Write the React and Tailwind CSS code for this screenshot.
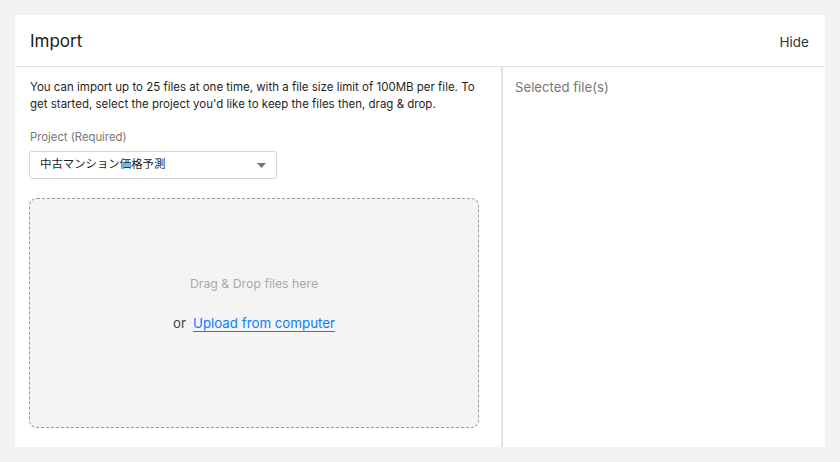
export default function App() {
  return (
    <div className="w-[840px] h-[462px] bg-[#f2f2f2] p-[15px] font-['Inter','Noto_Sans_CJK_JP',sans-serif]">
      <div className="bg-white h-[432px] flex flex-col">
        <div className="h-[52px] flex items-center justify-between pl-[15px] pr-[16px] pt-[3px] border-b border-[#e0e0e0] shrink-0">
          <span className="text-[17px] text-[#1a1a1a]">Import</span>
          <span className="text-[13.5px] text-[#333]">Hide</span>
        </div>
        <div className="flex flex-1 min-h-0">
          <div className="w-[488px] border-r-2 border-[#e3e3e3] pl-[14px] pr-[10px] pt-[12px] pb-[19px] flex flex-col">
            <p className="text-[11.5px] leading-[17px] text-[#1f1f1f] pl-[1px]">
              You can import up to 25 files at one time, with a file size limit of 100MB per file. To get started, select the project you'd like to keep the files then, drag &amp; drop.
            </p>
            <div className="mt-[17px] h-[14px] leading-[14px] text-[11.3px] text-[#777] pl-[1px]">Project (Required)</div>
            <div className="mt-[7px] w-[248px] h-[28px] border border-[#d4d4d4] rounded-[3px] flex items-center justify-between pl-[10px] pr-[9px] shrink-0">
              <span className="text-[11.4px] text-[#222]">中古マンション価格予測</span>
              <svg width="9" height="5" viewBox="0 0 9 5" className="mr-[1px]"><path d="M0 0h9L4.5 5z" fill="#777" /></svg>
            </div>
            <div className="mt-[19px] flex-1 bg-[#f4f4f4] border border-dashed border-[#9a9a9a] rounded-[8px] flex flex-col items-center justify-center w-[450px]">
              <div className="text-[12.3px] leading-[16px] text-[#aaa] mt-[-18px]">Drag &amp; Drop files here</div>
              <div className="mt-[22px] text-[13.3px] leading-[18px] flex items-center gap-[7px]">
                <span className="text-[#444]">or</span>
                <span className="text-[#0a7cff] underline underline-offset-[3px]">Upload from computer</span>
              </div>
            </div>
          </div>
          <div className="flex-1 px-[12px] pt-[11px]">
            <div className="text-[13.2px] text-[#777]">Selected file(s)</div>
          </div>
        </div>
      </div>
    </div>
  );
}
